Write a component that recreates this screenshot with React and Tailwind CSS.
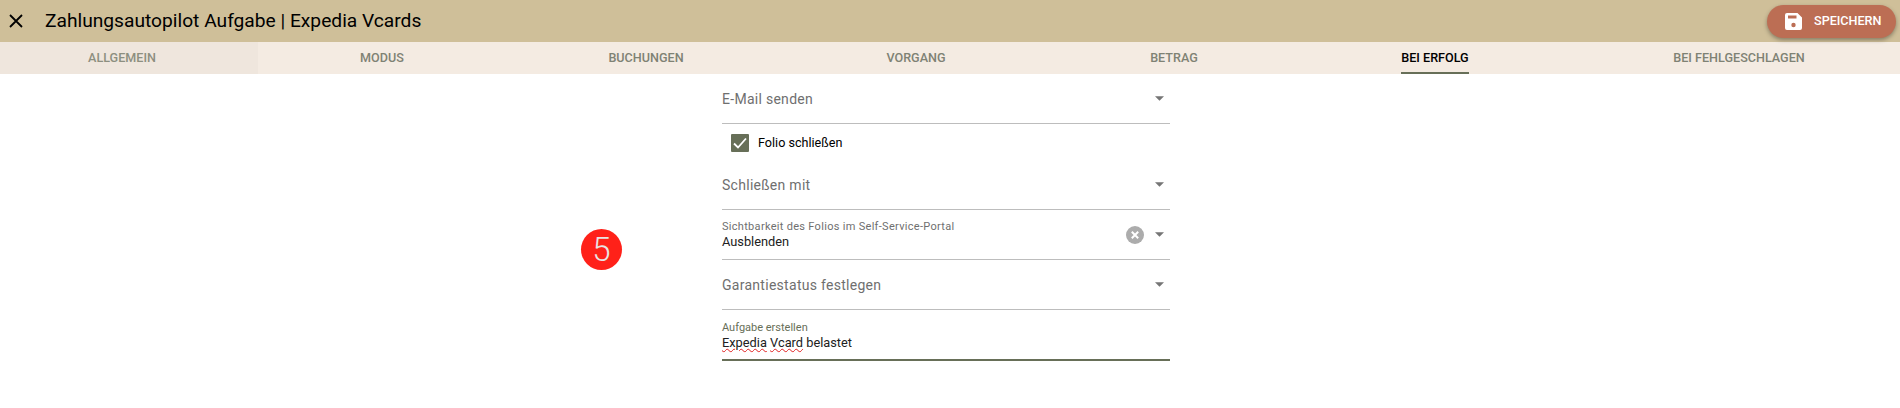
import React from 'react';

const tabs = [
  { name: 'ALLGEMEIN', width: 'w-[258px] pr-[14px] bg-[#efe6dd] text-[#8d8f80]' },
  { name: 'MODUS', width: 'w-[248px] text-[#7f8274]' },
  { name: 'BUCHUNGEN', width: 'w-[280px] text-[#7f8274]' },
  { name: 'VORGANG', width: 'w-[260px] text-[#7f8274]' },
  { name: 'BETRAG', width: 'w-[256px] text-[#7f8274]' },
  { name: 'BEI ERFOLG', width: 'w-[266px] text-black', active: true },
  { name: 'BEI FEHLGESCHLAGEN', width: 'flex-1 pl-[10px] text-[#7f8274]' },
];

function Arrow() {
  return (
    <svg width="9" height="5" viewBox="0 0 10 5" className="shrink-0">
      <path d="M0 0h10L5 5z" fill="#757575" />
    </svg>
  );
}

function SelectRow({ label }) {
  return (
    <div className="flex h-[50px] items-center justify-between border-b border-[#bdbdbd] pr-[6px] text-[14px] tracking-[0.28px] text-[#6f6f6f]">
      <span className="pt-[1px]">{label}</span>
      <Arrow />
    </div>
  );
}

export default function App() {
  return (
    <div className="relative h-[408px] w-[1900px] overflow-hidden bg-white font-['Roboto',sans-serif]">
      {/* header */}
      <header className="flex h-[42px] items-center justify-between bg-[#cfbf99] pl-[9px] pr-[4px]">
        <div className="flex items-center">
          <svg width="14" height="14" viewBox="0 0 14 14" className="shrink-0">
            <path d="M1 1l12 12M13 1L1 13" stroke="#000" strokeWidth="1.8" fill="none" />
          </svg>
          <h1 className="ml-[22px] text-[19.2px] font-normal leading-none text-black">
            Zahlungsautopilot Aufgabe | Expedia Vcards
          </h1>
        </div>
        <button className="flex h-[33px] w-[129px] items-center rounded-[17px] bg-[#bc6e54] pl-[18px] text-[12.6px] font-medium text-white shadow-[0_2px_4px_rgba(0,0,0,0.35)]">
          <svg width="17" height="17" viewBox="0 0 17 17" className="shrink-0">
            <path
              fillRule="evenodd"
              d="M2 0h10.5L17 4.5V15a2 2 0 0 1-2 2H2a2 2 0 0 1-2-2V2a2 2 0 0 1 2-2zM3 2.5v3h8.5v-3zM8.5 9.8a2.2 2.2 0 1 0 0 4.4 2.2 2.2 0 0 0 0-4.4z"
              fill="#fff"
            />
          </svg>
          <span className="ml-[12px]">SPEICHERN</span>
        </button>
      </header>

      {/* tabs */}
      <nav className="flex h-[32px] bg-[#f4ebe2]">
        {tabs.map((tab) => (
          <div key={tab.name} className={`flex items-center justify-center ${tab.width}`}>
            <span className={`flex h-full items-center border-b-2 pt-[2px] text-[12.6px] font-medium ${tab.active ? 'border-[#676f58]' : 'border-transparent'}`}>
              {tab.name}
            </span>
          </div>
        ))}
      </nav>

      {/* form */}
      <main className="ml-[722px] w-[448px]">
        <SelectRow label="E-Mail senden" />
        <div className="flex h-[36px] items-center pl-[9px] pt-[1px]">
          <span className="flex h-[18px] w-[18px] items-center justify-center rounded-[1px] bg-[#676f58]">
            <svg width="16" height="16" viewBox="0 0 16 16">
              <path d="M2 8.5l4 4 8-9" stroke="#fff" strokeWidth="1.8" fill="none" />
            </svg>
          </span>
          <span className="ml-[9px] pt-[1px] text-[12.6px] text-black">Folio schließen</span>
        </div>
        <SelectRow label="Schließen mit" />
        <div className="flex h-[50px] items-center justify-between border-b border-[#bdbdbd] pr-[6px]">
          <div className="flex flex-col pt-[2px]">
            <span className="text-[11px] leading-[13px] tracking-[0.3px] text-[#6f6f6f]">Sichtbarkeit des Folios im Self-Service-Portal</span>
            <span className="text-[12.8px] leading-[18px] text-[#212121]">Ausblenden</span>
          </div>
          <div className="flex items-center gap-[11px]">
            <svg width="18" height="18" viewBox="0 0 18 18">
              <circle cx="9" cy="9" r="9" fill="#acacac" />
              <path d="M5.8 5.8l6.4 6.4M12.2 5.8l-6.4 6.4" stroke="#fff" strokeWidth="2" fill="none" />
            </svg>
            <Arrow />
          </div>
        </div>
        <SelectRow label="Garantiestatus festlegen" />
        <div className="flex h-[51px] flex-col justify-center border-b-2 border-[#676f58] pt-[3px]">
          <span className="text-[11px] leading-[13px] text-[#676f58]">Aufgabe erstellen</span>
          <span className="text-[12.8px] leading-[18px] text-[#212121]">
            <span className="underline decoration-[#e02020] decoration-wavy decoration-1">Expedia</span>{' '}
            <span className="underline decoration-[#e02020] decoration-wavy decoration-1">Vcard</span> belastet
          </span>
        </div>
      </main>

      {/* step marker */}
      <div className="absolute left-[581px] top-[229px] flex h-[41px] w-[41px] items-center justify-center rounded-full bg-[#ff2119] text-[33px] font-light leading-none text-[#e8e4e4]">
        5
      </div>
    </div>
  );
}
